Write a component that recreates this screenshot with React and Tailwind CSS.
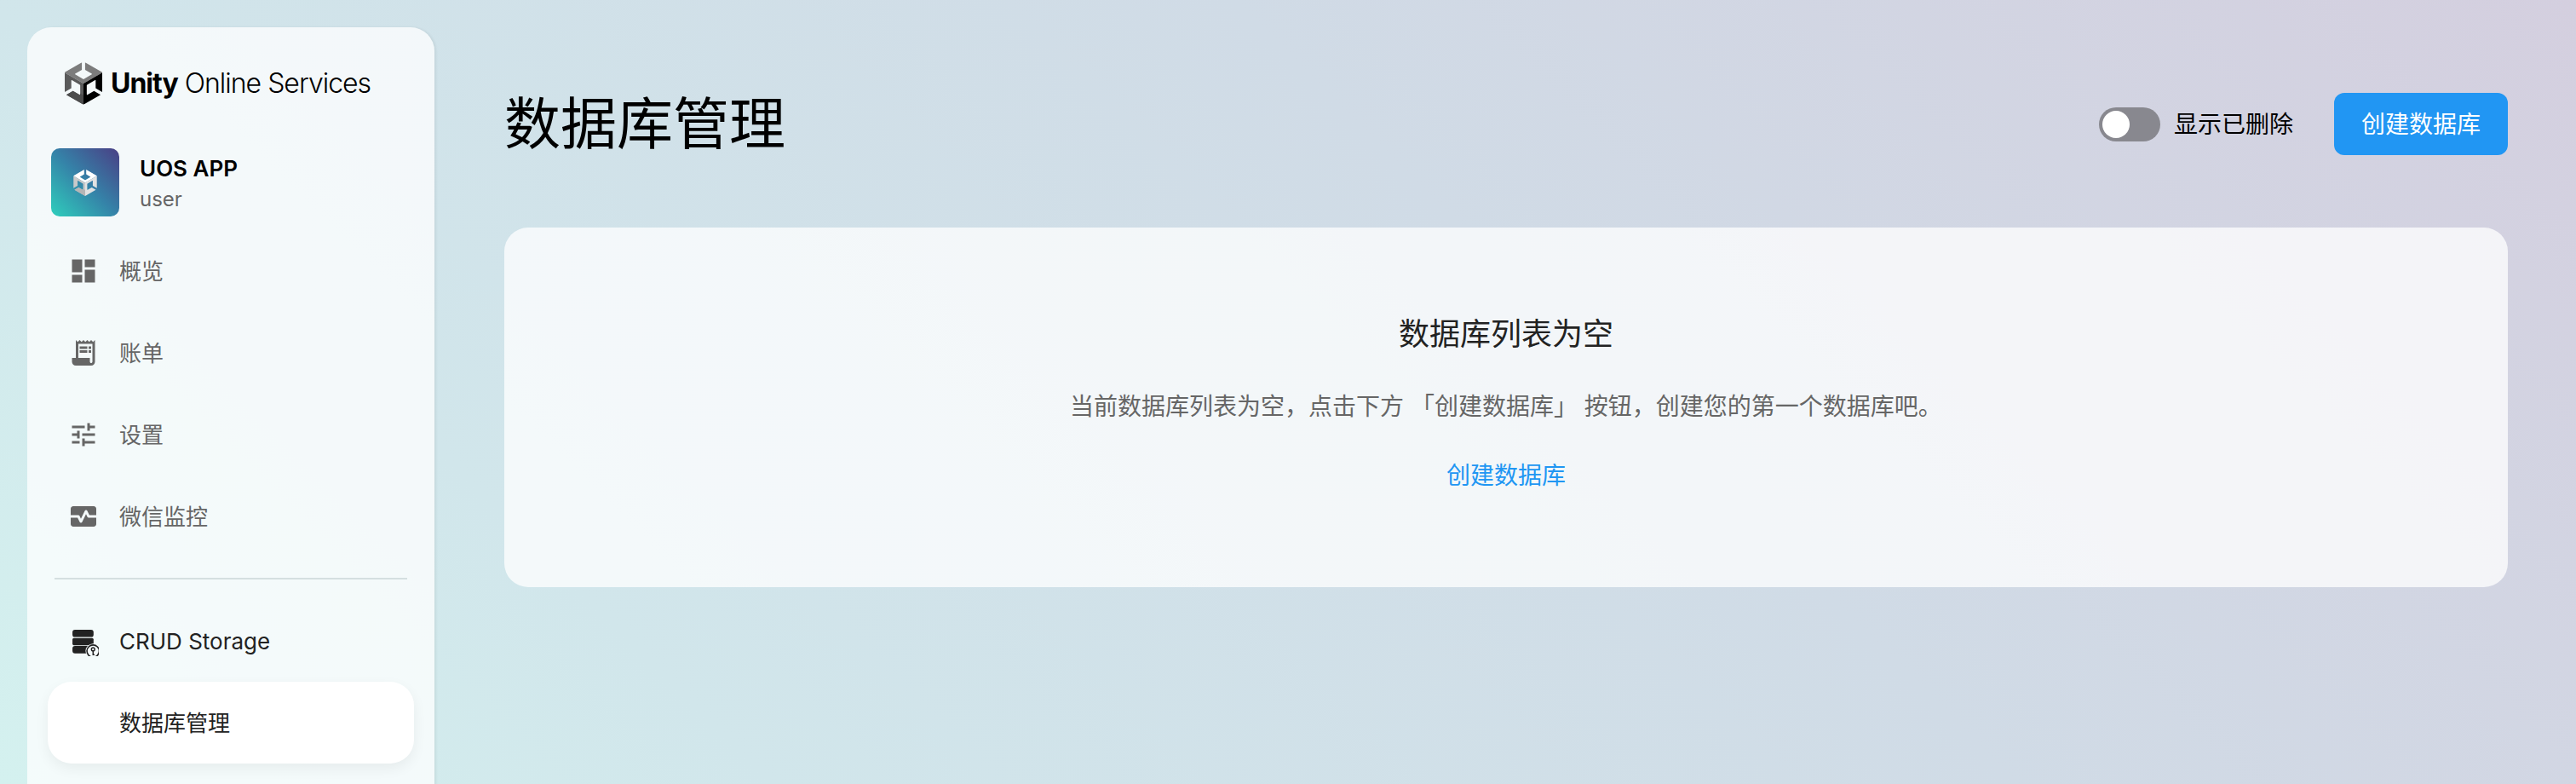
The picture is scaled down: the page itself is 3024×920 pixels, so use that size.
import React from 'react';
import { MdDashboard, MdReceiptLong, MdTune, MdMonitorHeart } from 'react-icons/md';

const UNITY_PATH =
  'm12.9288 4.2939 3.7997 2.1929c.1366.077.1415.2905 0 .3675l-4.515 2.6076a.4192.4192 0 0 1-.4246 0L7.274 6.8543c-.139-.0745-.1415-.293 0-.3675l3.7972-2.193V0L1.3758 5.5977V16.793l3.7177-2.1456v-4.3858c-.0025-.1565.1813-.2682.318-.1838l4.5148 2.6076a.4252.4252 0 0 1 .2136.3676v5.2127c.0025.1565-.1813.2682-.3179.1838l-3.7996-2.1929-3.7178 2.1457L12 24l9.6954-5.5977-3.7178-2.1457-3.7996 2.1929c-.1341.082-.3229-.0248-.3179-.1838V13.053c0-.1565.087-.2956.2136-.3676l4.5149-2.6076c.134-.082.3228.0224.3179.1838v4.3858l3.7177 2.1456V5.5977L12.9288 0Z';

const UnityCube = ({ id, className, top, left, right, bottom }) => (
  <svg viewBox="1.37 0 21.26 24" className={className}>
    <clipPath id={id}>
      <path d={UNITY_PATH} />
    </clipPath>
    <g clipPath={`url(#${id})`}>
      <polygon points="1,5.6 12,-1 23,5.6 12,12" fill={top} />
      <polygon points="1,5.6 12,12 12,24 1,24" fill={left} />
      <polygon points="23,5.6 12,12 12,24 23,24" fill={right} />
      <polygon points="1,18.4 6,15.5 12,18.6 12,25 1,25" fill={bottom} />
    </g>
  </svg>
);

const CrudIcon = () => (
  <svg viewBox="0 0 32 32" className="w-9 h-9 shrink-0">
    <rect x="4.5" y="4.5" width="22" height="7.6" rx="2.6" fill="#222" />
    <rect x="4.5" y="13" width="22" height="7.6" rx="1.5" fill="#222" />
    <rect x="4.5" y="21.4" width="22" height="7.6" rx="2.6" fill="#222" />
    <circle cx="26" cy="26.7" r="7.8" fill="#f4f9fa" />
    <circle cx="26" cy="26.7" r="6.4" fill="none" stroke="#222" strokeWidth="1.4" />
    <circle cx="26" cy="24.8" r="1.7" fill="none" stroke="#222" strokeWidth="1.3" />
    <path d="M26 26.4v4h1.5" fill="none" stroke="#222" strokeWidth="1.3" />
  </svg>
);

const NavItem = ({ icon, label }) => (
  <div className="h-24 flex items-center pl-6 gap-6 text-[26px] text-[#666]">
    {icon}
    <span>{label}</span>
  </div>
);

const App = () => {
  return (
    <div className="h-[920px] overflow-hidden flex items-start bg-[linear-gradient(45deg,#d4f1ef_0%,#d1e6eb_23%,#d0dbe6_60%,#d4cfdf_100%)] font-['Inter','Noto_Sans_CJK_SC',sans-serif]">
      <aside className="w-[478px] h-[900px] shrink-0 mt-8 ml-8 px-6 bg-white/75 rounded-t-[28px] shadow-[2px_0_3px_rgba(0,0,0,0.06)]">
        <div className="h-[142px] flex items-start pt-[41px] pl-5 gap-2.5">
          <UnityCube
            id="logo-cube"
            className="w-11 h-[50px] shrink-0"
            top="#7c7c7c"
            left="#5a5a5a"
            right="#000000"
            bottom="#4c4c4c"
          />
          <div className="text-[32px] leading-[50px] tracking-[-1px] text-black whitespace-nowrap">
            <span className="font-bold">Unity</span> <span className="font-light">Online Services</span>
          </div>
        </div>

        <div className="h-24 flex items-start pl-1 gap-6">
          <div className="w-20 h-20 rounded-[10px] flex items-center justify-center bg-[linear-gradient(to_top_right,#2fcfbc_0%,#3582a8_50%,#4a3f85_100%)]">
            <UnityCube
              id="avatar-cube"
              className="w-7 h-[31px]"
              top="#ffffff"
              left="#c9c9c9"
              right="#e2e2e2"
              bottom="#b5b5b5"
            />
          </div>
          <div className="pt-[6px]">
            <div className="text-[26px] leading-9 font-semibold text-black">UOS APP</div>
            <div className="text-[24px] leading-[34px] pt-px text-[#666]">user</div>
          </div>
        </div>

        <NavItem icon={<MdDashboard className="w-9 h-9 shrink-0 text-[#666]" />} label="概览" />
        <NavItem icon={<MdReceiptLong className="w-9 h-9 shrink-0 text-[#666]" />} label="账单" />
        <NavItem icon={<MdTune className="w-9 h-9 shrink-0 text-[#666]" />} label="设置" />
        <NavItem icon={<MdMonitorHeart className="w-9 h-9 shrink-0 text-[#666]" />} label="微信监控" />

        <div className="h-[2px] mt-6 mb-6 mx-2 bg-[#d5dfe0]" />

        <div className="h-24 flex items-center pl-6 gap-6 text-[26px] text-[#222]">
          <CrudIcon />
          <span>CRUD Storage</span>
        </div>
        <div className="h-24 flex items-center pl-[84px] text-[26px] text-[#222] bg-white rounded-[28px] shadow-[0_6px_16px_rgba(0,0,0,0.06)]">
          数据库管理
        </div>
      </aside>

      <main className="flex-1 min-w-0 pl-[82px] pr-[80px]">
        <div className="h-[267px] flex items-start justify-between">
          <h1 className="pt-[106px] text-[66px] leading-[78px] font-normal text-black">数据库管理</h1>
          <div className="flex items-center pt-[109px]">
            <div className="w-[72px] h-10 p-1 mr-4 rounded-full bg-[#88888f]">
              <div className="w-8 h-8 rounded-full bg-white" />
            </div>
            <span className="text-[28px] text-black">显示已删除</span>
            <button className="w-[204px] h-[73px] ml-12 rounded-xl bg-[#2196f3] text-white text-[28px]">
              创建数据库
            </button>
          </div>
        </div>

        <div className="h-[422px] flex flex-col items-center bg-white/75 rounded-[28px]">
          <div className="mt-[100px] text-[36px] leading-[50px] text-[#222]">数据库列表为空</div>
          <div className="mt-10 text-[28px] leading-10 text-[#666]">
            当前数据库列表为空，点击下方 「创建数据库」 按钮，创建您的第一个数据库吧。
          </div>
          <div className="mt-[41px] text-[28px] leading-10 text-[#2196f3]">创建数据库</div>
        </div>
      </main>
    </div>
  );
};

export default App;
